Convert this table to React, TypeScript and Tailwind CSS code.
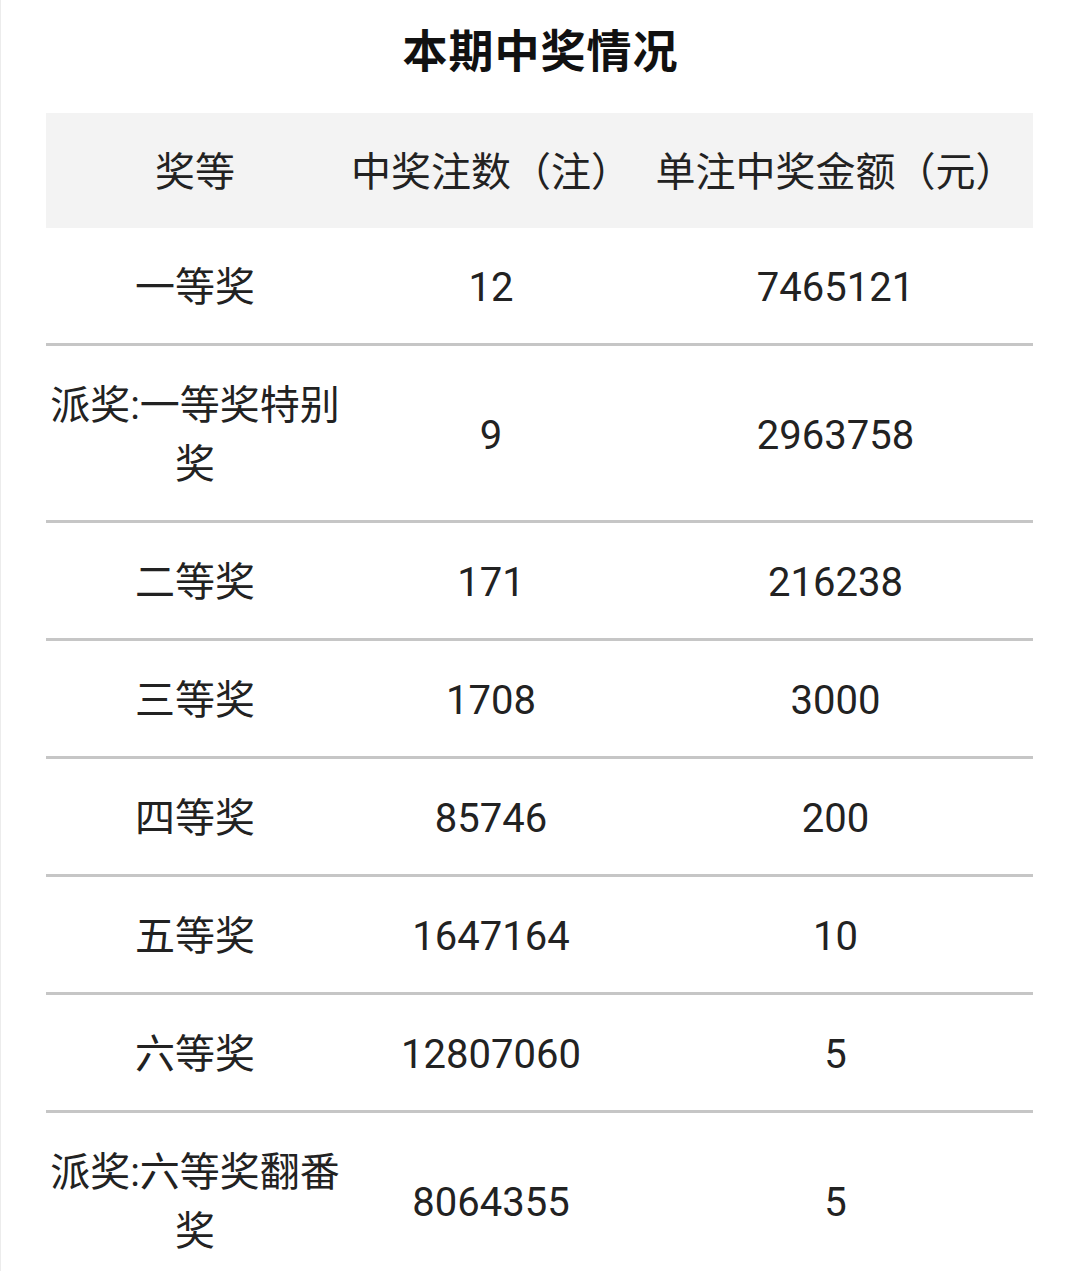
const ROWS: { level: string; count: string; amount: string }[] = [
  { level: '一等奖', count: '12', amount: '7465121' },
  { level: '派奖:一等奖特别奖', count: '9', amount: '2963758' },
  { level: '二等奖', count: '171', amount: '216238' },
  { level: '三等奖', count: '1708', amount: '3000' },
  { level: '四等奖', count: '85746', amount: '200' },
  { level: '五等奖', count: '1647164', amount: '10' },
  { level: '六等奖', count: '12807060', amount: '5' },
  { level: '派奖:六等奖翻番奖', count: '8064355', amount: '5' },
];

export default function App() {
  return (
    <div
      className="min-h-[1271px] bg-white border-l border-[#ececec] text-[#222]"
      style={{ fontFamily: 'Roboto, "Noto Sans CJK SC", sans-serif' }}
    >
      {/* Title */}
      <div className="h-[113px] flex items-center justify-center">
        <h1 className="text-[45px] font-bold text-[#111] tracking-[1px] leading-none pb-[8px]">本期中奖情况</h1>
      </div>

      {/* Table */}
      <div className="px-[45px]">
        <table className="w-[987px] table-fixed border-collapse text-[40px] text-center">
          <colgroup>
            <col className="w-[298px]" />
            <col className="w-[294px]" />
            <col className="w-[395px]" />
          </colgroup>
          <thead>
            <tr className="bg-[#f3f3f3]">
              <th className="font-normal h-[115px] pt-[4px] px-1 leading-[59px]">奖等</th>
              <th className="font-normal h-[115px] pt-[4px] px-1 leading-[59px] whitespace-nowrap">中奖注数（注）</th>
              <th className="font-normal h-[115px] pt-[4px] px-1 leading-[59px] whitespace-nowrap">单注中奖金额（元）</th>
            </tr>
          </thead>
          <tbody>
            {ROWS.map((r, i) => (
              <tr key={r.level} className={i < ROWS.length - 1 ? 'border-b-[3px] border-[#c6c6c6]' : ''}>
                <td className="pt-[30px] pb-[26px] px-1 leading-[59px]">{r.level}</td>
                <td className="pt-[30px] pb-[26px] px-1 leading-[59px]">{r.count}</td>
                <td className="pt-[30px] pb-[26px] px-1 leading-[59px]">{r.amount}</td>
              </tr>
            ))}
          </tbody>
        </table>
      </div>
    </div>
  );
}
